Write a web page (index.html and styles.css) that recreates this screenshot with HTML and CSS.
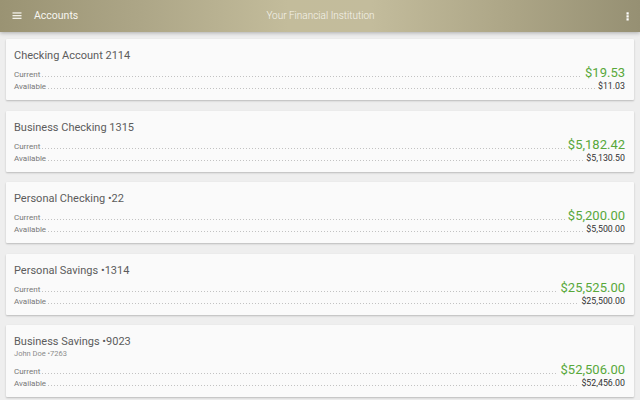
FILE: index.html
```html
<!DOCTYPE html>
<html>
<head>
<meta charset="utf-8">
<link rel="stylesheet" href="styles.css">
</head>
<body>
<header class="appbar">
  <div class="bar-left">
    <svg class="menu" width="10" height="8" viewBox="0 0 10 8"><rect x="0.5" y="0.3" width="9" height="1.3" fill="#f2f0e8"/><rect x="0.5" y="3" width="9" height="1.3" fill="#f2f0e8"/><rect x="0.5" y="5.7" width="9" height="1.3" fill="#f2f0e8"/></svg>
    <span class="bar-title">Accounts</span>
  </div>
  <div class="bar-center">Your Financial Institution</div>
  <div class="bar-right">
    <svg class="kebab" width="4" height="9" viewBox="0 0 4 9"><rect x="0.5" y="0.3" width="2.2" height="2.2" fill="#fff"/><rect x="0.5" y="3.3" width="2.2" height="2.2" fill="#fff"/><rect x="0.5" y="6.3" width="2.2" height="2.2" fill="#fff"/></svg>
  </div>
</header>
<main class="list">
  <section class="card">
    <div class="name">Checking Account 2114</div>
    <div class="row cur"><span class="label">Current</span><span class="leader"></span><span class="amt">$19.53</span></div>
    <div class="row avl"><span class="label">Available</span><span class="leader"></span><span class="amt">$11.03</span></div>
  </section>
  <section class="card">
    <div class="name">Business Checking 1315</div>
    <div class="row cur"><span class="label">Current</span><span class="leader"></span><span class="amt">$5,182.42</span></div>
    <div class="row avl"><span class="label">Available</span><span class="leader"></span><span class="amt">$5,130.50</span></div>
  </section>
  <section class="card">
    <div class="name">Personal Checking •22</div>
    <div class="row cur"><span class="label">Current</span><span class="leader"></span><span class="amt">$5,200.00</span></div>
    <div class="row avl"><span class="label">Available</span><span class="leader"></span><span class="amt">$5,500.00</span></div>
  </section>
  <section class="card">
    <div class="name">Personal Savings •1314</div>
    <div class="row cur"><span class="label">Current</span><span class="leader"></span><span class="amt">$25,525.00</span></div>
    <div class="row avl"><span class="label">Available</span><span class="leader"></span><span class="amt">$25,500.00</span></div>
  </section>
  <section class="card">
    <div class="name">Business Savings •9023</div>
    <div class="owner">John Doe •7263</div>
    <div class="row cur"><span class="label">Current</span><span class="leader"></span><span class="amt">$52,506.00</span></div>
    <div class="row avl"><span class="label">Available</span><span class="leader"></span><span class="amt">$52,456.00</span></div>
  </section>
</main>
</body>
</html>
```
FILE: styles.css
```css
html, body {
  margin: 0;
  padding: 0;
}
body {
  width: 640px;
  height: 400px;
  overflow: hidden;
  background: #eeeeee;
  font-family: Roboto, "Liberation Sans", sans-serif;
}
.appbar {
  position: relative;
  z-index: 2;
  height: 32px;
  display: grid;
  grid-template-columns: 1fr auto 1fr;
  align-items: center;
  background: linear-gradient(90deg, #9a9373 0%, #ada687 22%, #c3bc9b 45%, #c3bc9c 58%, #aca586 80%, #969073 100%);
  box-shadow: 0 1px 4px rgba(0, 0, 0, 0.28);
}
.bar-left {
  display: flex;
  align-items: center;
  padding-left: 12px;
}
.menu {
  display: block;
}
.bar-title {
  margin-left: 12px;
  font-size: 10.5px;
  color: #f7f6f0;
  line-height: 12px;
}
.bar-center {
  font-size: 10px;
  font-weight: 300;
  color: #f6f4ec;
  line-height: 12px;
  padding-left: 1px;
}
.bar-right {
  display: flex;
  justify-content: flex-end;
  padding-right: 10px;
}
.kebab {
  display: block;
}
.list {
  display: flex;
  flex-direction: column;
  gap: 10.5px;
  padding: 7px 6px 0 6px;
}
.card {
  background: #fafafa;
  padding: 10px 9px 8px 8px;
  border-radius: 1px;
  box-shadow: 0 1px 2px rgba(0, 0, 0, 0.22);
}
.name {
  font-size: 11px;
  line-height: 13px;
  color: #5c5c5c;
}
.owner {
  font-size: 7.5px;
  line-height: 10px;
  color: #8c8c8c;
  margin-top: 1px;
}
.row {
  display: flex;
  align-items: baseline;
}
.row.cur {
  margin-top: 3px;
  height: 15px;
  line-height: 15px;
}
.row.avl {
  height: 12px;
  line-height: 12px;
}
.label {
  font-size: 8px;
  color: #777777;
}
.leader {
  flex: 1;
  height: 1px;
  background-image: linear-gradient(to right, #c2c2c2 1px, transparent 1px);
  background-size: 3px 1px;
  background-repeat: repeat-x;
  margin: 0 3px 0 2px;
}
.cur .amt {
  font-size: 13px;
  color: #58a83a;
}
.avl .amt {
  font-size: 8.8px;
  color: #333333;
}
```
